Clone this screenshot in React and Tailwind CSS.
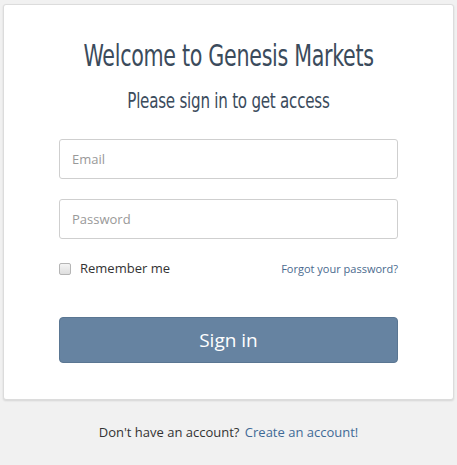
export default function App() {
  return (
    <div className="min-h-[465px] bg-[#f1f1f1] pt-1 px-[3px] font-['Open_Sans',sans-serif]">
      <div className="bg-white border border-[#dcdcdc] rounded-[3px] shadow-[0_1px_2px_rgba(0,0,0,0.12)] px-[55px] pb-[36px]">
        <h1 className="-mx-[55px] flex justify-center text-[#3b4b5c] font-['DejaVu_Sans_Condensed','DejaVu_Sans',sans-serif] font-stretch-condensed text-[30px] leading-none pt-[36px] tracking-[-0.4px] whitespace-nowrap">
          <span className="inline-block scale-x-[0.765]">Welcome to Genesis Markets</span>
        </h1>
        <h2 className="-mx-[55px] flex justify-center text-[#3b4b5c] font-['DejaVu_Sans_Condensed','DejaVu_Sans',sans-serif] font-stretch-condensed text-[21px] leading-none mt-[20px] tracking-[-0.3px] whitespace-nowrap">
          <span className="inline-block scale-x-[0.8]">Please sign in to get access</span>
        </h2>
        <div className="mt-[27px] flex flex-col gap-[20px]">
          <input
            type="text"
            placeholder="Email"
            className="h-[40px] w-full border border-[#cfcfcf] rounded-[3px] px-3 text-[13px] text-[#555] placeholder:text-[#999] outline-none"
          />
          <input
            type="password"
            placeholder="Password"
            className="h-[40px] w-full border border-[#cfcfcf] rounded-[3px] px-3 text-[13px] text-[#555] placeholder:text-[#999] outline-none"
          />
        </div>
        <div className="flex items-center justify-between mt-[22px] h-[16px]">
          <label className="flex items-center gap-[9px] text-[13px] text-[#333]">
            <span className="w-[12px] h-[12px] border border-[#b5b5b5] rounded-[2px] bg-gradient-to-b from-[#f4f4f4] to-[#dedede]" />
            Remember me
          </label>
          <a className="text-[11px] text-[#4a6a8e]">Forgot your password?</a>
        </div>
        <button className="mt-[40px] w-full h-[46px] bg-[#6683a1] border border-[#5a7692] rounded-[4px] text-white text-[19px]">
          Sign in
        </button>
      </div>
      <p className="text-center text-[13px] text-[#333] mt-[23px]">
        Don't have an account?{" "}
        <a className="text-[#3f6a96] ml-0.5">Create an account!</a>
      </p>
    </div>
  )
}
